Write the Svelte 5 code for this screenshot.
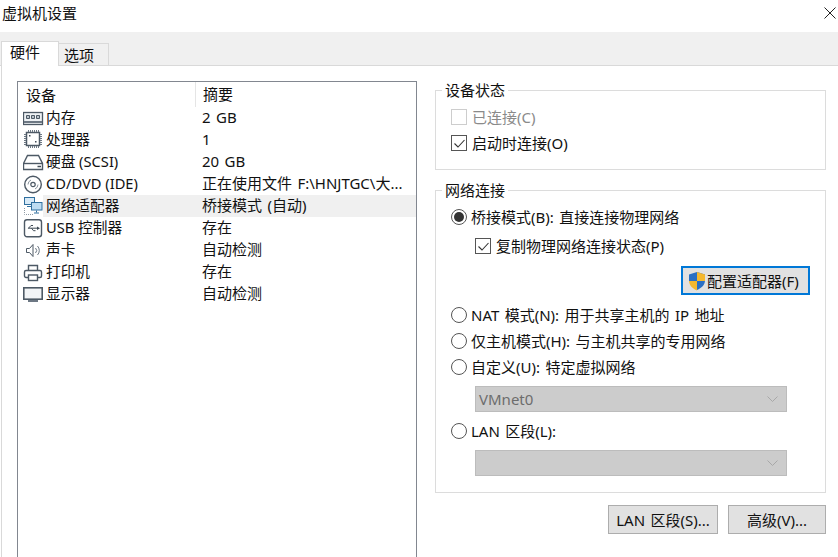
<script lang="ts">
  const devices = [
    { icon: "memory", name: "内存", summary: "2 GB" },
    { icon: "cpu", name: "处理器", summary: "1" },
    { icon: "disk", name: "硬盘 (SCSI)", summary: "20 GB" },
    { icon: "cd", name: "CD/DVD (IDE)", summary: "正在使用文件 F:\\HNJTGC\\大..." },
    { icon: "net", name: "网络适配器", summary: "桥接模式 (自动)", selected: true },
    { icon: "usb", name: "USB 控制器", summary: "存在" },
    { icon: "sound", name: "声卡", summary: "自动检测" },
    { icon: "printer", name: "打印机", summary: "存在" },
    { icon: "display", name: "显示器", summary: "自动检测" },
  ];
</script>

{#snippet deviceIcon(kind: string)}
  <svg class="dev-icon" width="22" height="22" viewBox="0 0 22 22" fill="none" stroke="#4d5965" stroke-width="1">
    {#if kind === "memory"}
      <rect x=".5" y="5.500" width="19" height="12" fill="#eef1f4" stroke-width="1.300" />
      <path d="M3.500 8.500h3v3h-3zM8.500 8.500h3v3h-3zM13.500 8.500h3v3h-3z" fill="#b9c2ca" />
      <path d="M1 15h18" stroke="#6d7884" stroke-width="2" />
    {:else if kind === "cpu"}
      <rect x="3.500" y="3.500" width="13" height="13" stroke-width="1.500" fill="#fff" />
      <path d="M5.500 1v2M7.500 1v2M9.500 1v2M11.500 1v2M13.500 1v2M15.500 1v2M5.500 17v2M7.500 17v2M9.500 17v2M11.500 17v2M13.500 17v2M15.500 17v2M1 5.500h2M1 7.500h2M1 9.500h2M1 11.500h2M1 13.500h2M1 15.500h2M17 5.500h2M17 7.500h2M17 9.500h2M17 11.500h2M17 13.500h2M17 15.500h2" stroke="#6d7884" />
      <path d="M6 6h1.500v1.500H6zM12 12h1.500v1.500H12z" fill="#3f4a55" stroke="none" />
    {:else if kind === "disk"}
      <path d="M4.500 4.500h11l4 8v6H.5v-6z" stroke-width="1.400" fill="#fff" />
      <path d="M.5 12.500h19" stroke-width="1.400" />
      <path d="M14.500 15.500H18" stroke="#3f4a55" stroke-width="1.500" />
    {:else if kind === "cd"}
      <circle cx="10" cy="11.500" r="8.300" stroke-width="1.400" />
      <circle cx="10" cy="11.500" r="2.200" stroke-width="1.200" />
      <path d="M5 11.500a5 5 0 0 1 3-4.500M15 11.500a5 5 0 0 1-3 4.500" stroke="#8a949e" />
    {:else if kind === "net"}
      <rect x="1.500" y="2.500" width="10" height="7" stroke="#2f6f9f" fill="#d8eaf7" />
      <path d="M4 11.500h5" stroke="#2f6f9f" />
      <rect x="8.500" y="7.500" width="10.500" height="7.500" stroke="#2f6f9f" fill="#bcdcf2" />
      <path d="M13.500 15.500v2M11 18h5" stroke="#2f6f9f" />
      <path d="M1.500 13v6.500H10" stroke="#8f9aa5" stroke-dasharray="1 1" />
    {:else if kind === "usb"}
      <rect x="1.500" y="2.700" width="17" height="17" rx="2.500" stroke-width="1.400" />
      <path d="M5 11.200h10M5.500 11.200l2.500-2.700h2M8.500 11.200l2 2.500h2" stroke="#3f4a55" />
      <path d="M14 9.500l3 1.700-3 1.700z" fill="#3f4a55" stroke="none" />
    {:else if kind === "sound"}
      <path d="M3.500 9.500h3l3.500-4v12l-3.500-4h-3z" />
      <path d="M12.500 9a3.500 3.500 0 0 1 0 5M14.500 7a6.500 6.500 0 0 1 0 9" stroke="#6d7884" />
    {:else if kind === "printer"}
      <path d="M5.500 9.500v-5h9v5" stroke-width="1.400" />
      <rect x="1.500" y="9.500" width="17" height="7" rx="1.500" stroke-width="1.400" />
      <rect x="5.500" y="14" width="9" height="5.500" fill="#fff" stroke-width="1.400" />
    {:else}
      <rect x=".8" y="4.800" width="18.400" height="11.400" stroke-width="1.600" fill="#f2f4f6" />
      <path d="M5 18h10" stroke="#6d7884" stroke-width="2" />
    {/if}
  </svg>
{/snippet}

{#snippet radio(label: string, checked = false)}
  <div class="option radio-option">
    <span class="radio" class:on={checked}></span>
    <span>{label}</span>
  </div>
{/snippet}

{#snippet check(label: string, checked = true, disabled = false)}
  <div class="option" class:disabled>
    <span class="box">
      {#if checked}
        <svg width="13" height="13" viewBox="0 0 13 13" fill="none" stroke="#333" stroke-width="1.100">
          <path d="M1.500 6.500l3.500 3.500 6.500-7" />
        </svg>
      {/if}
    </span>
    <span>{label}</span>
  </div>
{/snippet}

{#snippet select(value: string)}
  <div class="select">
    <span>{value}</span>
    <svg width="11" height="6" viewBox="0 0 11 6" fill="none" stroke="#a8a8a8">
      <path d="M.5 .5l5 5 5-5" />
    </svg>
  </div>
{/snippet}

<div class="dialog">
  <header class="title">
    <span>虚拟机设置</span>
    <svg class="close" width="12" height="12" viewBox="0 0 12 12" stroke="#222">
      <path d="M.5 .5l11 11M11.500 .5l-11 11" />
    </svg>
  </header>

  <nav class="tabs">
    <div class="tab active">硬件</div>
    <div class="tab">选项</div>
  </nav>

  <main class="page">
    <section class="list">
      <div class="row head">
        <div class="col-name">设备</div>
        <div class="col-sum">摘要</div>
      </div>
      {#each devices as d}
        <div class="row" class:selected={d.selected}>
          <div class="col-name">
            {@render deviceIcon(d.icon)}
            <span class="dev-name">{d.name}</span>
          </div>
          <div class="col-sum">{d.summary}</div>
        </div>
      {/each}
    </section>

    <section class="side">
      <fieldset class="group status">
        <legend>设备状态</legend>
        {@render check("已连接(C)", false, true)}
        {@render check("启动时连接(O)")}
      </fieldset>

      <fieldset class="group network">
        <legend>网络连接</legend>
        {@render radio("桥接模式(B): 直接连接物理网络", true)}
        <div class="indent">{@render check("复制物理网络连接状态(P)")}</div>
        <div class="config-line">
          <button class="btn focused">
            <svg width="20" height="20" viewBox="0 0 20 20">
              <path d="M10 1l8 2.500v6c0 4.500-3.500 7.500-8 9.500V10H2V3.500z" fill="#2a6fc4" />
              <path d="M10 1v9h8V3.500zM2 10c.3 4.500 3.500 7.500 8 9.500V10z" fill="#f5b82e" />
            </svg>
            <span>配置适配器(F)</span>
          </button>
        </div>
        <div class="modes">
          {@render radio("NAT 模式(N): 用于共享主机的 IP 地址")}
          {@render radio("仅主机模式(H): 与主机共享的专用网络")}
          {@render radio("自定义(U): 特定虚拟网络")}
        </div>
        {@render select("VMnet0")}
        {@render radio("LAN 区段(L):")}
        {@render select("")}
      </fieldset>

      <div class="actions">
        <button class="btn lan">LAN 区段(S)...</button>
        <button class="btn adv">高级(V)...</button>
      </div>
    </section>
  </main>
</div>

<style>
  :global(body) {
    margin: 0;
    background: #fff;
  }

  .dialog {
    width: 838px;
    height: 557px;
    overflow: hidden;
    display: flex;
    flex-direction: column;
    font-family: "Noto Sans", "Noto Sans CJK SC", sans-serif;
    font-size: 15px;
    word-spacing: 1.5px;
    line-height: 20px;
    color: #111;
    background: #fff;
  }

  .title {
    height: 32px;
    flex-shrink: 0;
    display: flex;
    align-items: flex-start;
    justify-content: space-between;
    padding: 3px 2px 0 2px;
    box-sizing: border-box;
  }

  .close {
    margin-top: 4px;
  }

  .tabs {
    height: 34px;
    flex-shrink: 0;
    box-sizing: border-box;
    display: flex;
    align-items: flex-end;
    padding-left: 1px;
    background: #f0f0f0;
    border-bottom: 1px solid #d9d9d9;
  }

  .tab {
    box-sizing: border-box;
    width: 50px;
    height: 23px;
    margin-bottom: -1px;
    padding-left: 5px;
    line-height: 23px;
    background: #f0f0f0;
    border: 1px solid #d9d9d9;
    border-left: none;
  }

  .tab.active {
    width: 58px;
    height: 25px;
    padding-left: 8px;
    line-height: 21px;
    background: #fff;
    border-left: 1px solid #d9d9d9;
    border-bottom: none;
  }

  .page {
    flex: 1;
    min-height: 0;
    display: flex;
    gap: 18px;
    padding: 14px 12px 0 15px;
    border-left: 1px solid #d9d9d9;
    margin-left: 1px;
  }

  .list {
    width: 400px;
    flex-shrink: 0;
    box-sizing: border-box;
    height: 600px;
    margin-top: 1px;
    border: 1px solid #828790;
  }

  .row {
    display: flex;
    height: 22px;
    line-height: 20px;
  }

  .row.head {
    height: 25px;
    line-height: 24px;
  }

  .col-name {
    width: 178px;
    flex-shrink: 0;
    display: flex;
    align-items: center;
    padding-left: 5px;
    box-sizing: border-box;
  }

  .col-sum {
    padding-left: 6px;
    white-space: nowrap;
  }

  .head .col-name {
    padding-left: 8px;
    border-right: 1px solid #e5e5e5;
  }

  .head .col-sum {
    padding-left: 7px;
  }

  .selected .col-sum,
  .selected .dev-name {
    background: #f0f0f0;
  }

  .selected .col-sum {
    flex: 1;
  }

  .selected .dev-name {
    flex: 1;
    margin-left: -2px;
    padding-left: 3px;
  }

  .dev-icon {
    flex-shrink: 0;
  }

  .dev-name {
    box-sizing: border-box;
    height: 22px;
    padding-left: 1px;
    font-size: 14.67px;
    word-spacing: 0;
    white-space: nowrap;
  }

  .side {
    flex: 1;
    min-width: 0;
  }

  .group {
    margin: 0;
    padding: 4px 15px 0;
    border: 1px solid #dcdcdc;
    box-sizing: border-box;
    min-width: 0;
  }

  .group legend {
    padding: 0 3px;
    margin-left: -9px;
    line-height: 20px;
  }

  .status {
    height: 90px;
    margin-bottom: 10px;
  }

  .network {
    height: 313px;
  }

  .option {
    display: flex;
    align-items: center;
    gap: 5px;
    height: 26px;
    white-space: nowrap;
  }

  .radio-option {
    gap: 4px;
  }

  .option.disabled {
    color: #8a8a8a;
  }

  .option.disabled .box {
    border-color: #cdcdcd;
  }

  .box {
    width: 14px;
    height: 14px;
    flex-shrink: 0;
    border: 1px solid #555;
    display: flex;
    align-items: center;
    justify-content: center;
    background: #fff;
  }

  .radio {
    box-sizing: border-box;
    width: 16px;
    height: 16px;
    flex-shrink: 0;
    border: 1px solid #555;
    border-radius: 50%;
    background: #fff;
    position: relative;
  }

  .radio.on::after {
    content: "";
    position: absolute;
    inset: 2px;
    border-radius: 50%;
    background: #333;
  }

  .indent {
    padding-left: 24px;
    margin-top: 3px;
  }

  .config-line {
    display: flex;
    justify-content: flex-end;
    margin-top: 7px;
  }

  .btn {
    font: inherit;
    word-spacing: inherit;
    color: inherit;
    box-sizing: border-box;
    background: #e1e1e1;
    border: 1px solid #adadad;
    padding: 0;
    height: 29px;
  }

  .btn.focused {
    width: 129px;
    border: 2px solid #0078d7;
    display: flex;
    align-items: center;
    padding-left: 4px;
    box-shadow: inset 0 0 0 1px #e1e1e1;
  }

  .modes {
    margin-top: 7px;
    margin-bottom: 1px;
  }

  .select {
    box-sizing: border-box;
    width: 312px;
    height: 26px;
    margin: 6px 0 6px 24px;
    padding: 0 8px 0 3px;
    display: flex;
    align-items: center;
    justify-content: space-between;
    background: #cccccc;
    border: 1px solid #bcbcbc;
    color: #6d6d6d;
  }

  .actions {
    display: flex;
    justify-content: flex-end;
    gap: 10px;
    margin-top: 12px;
  }

  .btn.lan {
    width: 110px;
  }

  .btn.adv {
    width: 98px;
  }
</style>
